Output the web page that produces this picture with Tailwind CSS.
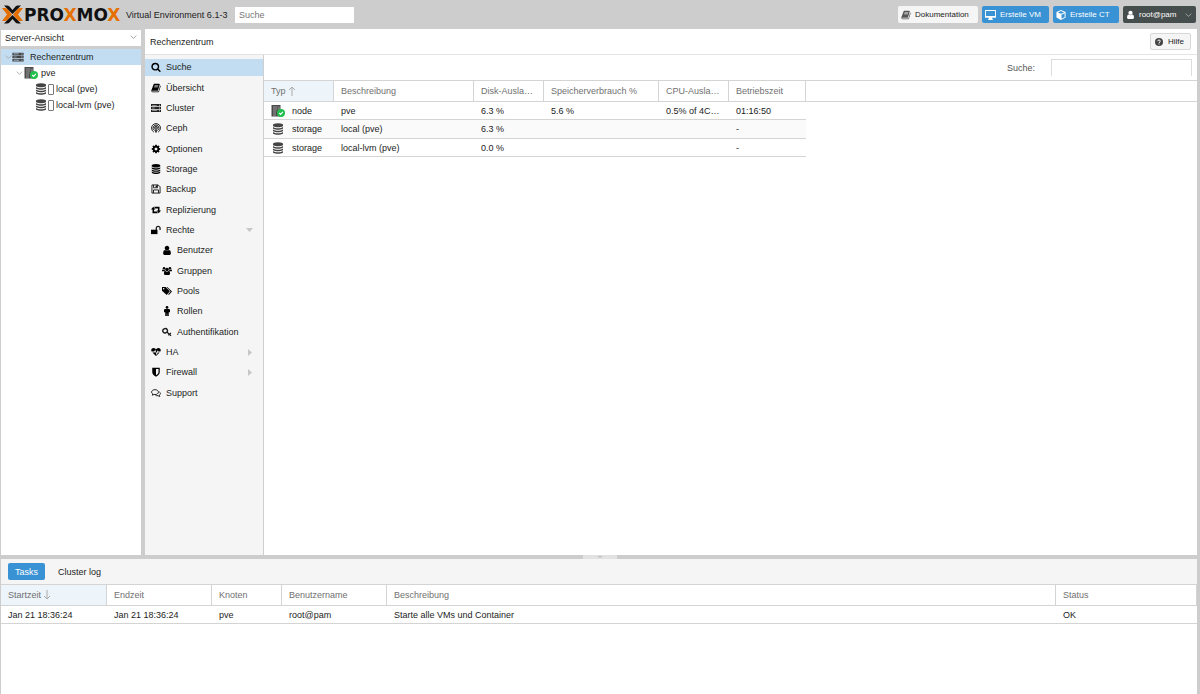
<!DOCTYPE html>
<html lang="de">
<head>
<meta charset="utf-8">
<title>Proxmox Virtual Environment</title>
<script src="https://cdn.jsdelivr.net/npm/@tailwindcss/browser@4"></script>
</head>
<body class="flex min-h-screen flex-col bg-[#cdcdcd] font-['Liberation_Sans',Arial,sans-serif] text-[9px] leading-3 text-[#1c1c1c]">
<svg class="hidden" aria-hidden="true">
  <symbol id="search" viewBox="0 0 1792 1792"><path d="M1216 832q0-185-131.5-316.5t-316.5-131.5-316.5 131.5-131.5 316.5 131.5 316.5 316.5 131.5 316.5-131.5 131.5-316.5zm512 832q0 52-38 90t-90 38q-54 0-90-38l-343-342q-179 124-399 124-143 0-273.5-55.5t-225-150-150-225-55.5-273.5 55.5-273.5 150-225 225-150 273.5-55.5 273.5 55.5 225 150 150 225 55.5 273.5q0 220-124 399l343 343q37 37 37 90z"/></symbol>
  <symbol id="book" viewBox="0 0 1792 1792"><path d="M1703 478q40 57 18 129l-275 906q-19 64-76.5 107.5t-122.5 43.5h-923q-77 0-148.5-53.5t-99.5-131.5q-24-67-2-127 0-4 3-27t4-37q1-8-3-21.5t-3-19.5q2-11 8-21t16.5-23.5 16.5-23.5q23-38 45-91.5t30-91.5q3-10 .5-30t-.5-28q3-11 17-28t17-23q21-36 42-92t25-90q1-9-2.5-32t.5-28q4-13 22-30.5t22-22.5q19-26 42.5-84.5t27.5-96.5q1-8-3-25.5t-2-26.5q2-8 9-18t18-23 17-21q8-12 16.5-30.5t15-35 16-36 19.5-32 26.5-23.5 36-11.5 47.5 5.5l-1 3q38-9 51-9h761q74 0 114 56t18 130l-274 906q-36 119-71.5 153.5t-128.5 34.5h-869q-27 0-38 15-11 16-1 43 24 70 144 70h923q29 0 56-15.5t35-41.5l300-987q7-22 5-57 38 15 59 43zm-1064 2q-4 13 2 22.5t20 9.5h608q13 0 25.5-9.5t16.5-22.5l21-64q4-13-2-22.5t-20-9.5h-608q-13 0-25.5 9.5t-16.5 22.5zm-83 256q-4 13 2 22.5t20 9.5h608q13 0 25.5-9.5t16.5-22.5l21-64q4-13-2-22.5t-20-9.5h-608q-13 0-25.5 9.5t-16.5 22.5z"/></symbol>
  <symbol id="server" viewBox="0 0 18 16"><path fill-rule="evenodd" d="M0 1h18v4H0zM0 6h18v4H0zM0 11h18v4H0zM2 2.500v1h8v-1zM2 7.500v1h5v-1zM2 12.500v1h9v-1zM14.500 2.200v1.600H16V2.200zM14.500 7.200v1.600H16V7.200zM14.500 12.200v1.600H16v-1.600z"/></symbol>
  <symbol id="ceph" viewBox="0 0 16 16"><g fill="none" stroke="currentColor" stroke-width="1.600" stroke-linecap="round"><path d="M4 14.200a7.200 7.200 0 1 1 8 0"/><path d="M5 11.700a4.700 4.700 0 1 1 6 0"/><path d="M6.200 9.300a2.300 2.300 0 1 1 3.600 0"/></g><circle cx="8" cy="8" r="1.200"/><path d="M6.800 10h2.400v5H6.800z"/></symbol>
  <symbol id="cog" viewBox="0 0 1792 1792"><path d="M1152 896q0-106-75-181t-181-75-181 75-75 181 75 181 181 75 181-75 75-181zm512-109v222q0 12-8 23t-20 13l-185 28q-19 54-39 91 35 50 107 138 10 12 10 25t-9 23q-27 37-99 108t-94 71q-12 0-26-9l-138-108q-44 23-91 38-16 136-29 186-7 28-36 28h-222q-14 0-24.500-8.500t-11.500-21.500l-28-184q-49-16-90-37l-141 107q-10 9-25 9-14 0-25-11-126-114-165-168-7-10-7-23 0-12 8-23 15-21 51-66.500t54-70.500q-27-50-41-99l-183-27q-13-2-21-12.500t-8-23.500v-222q0-12 8-23t19-13l186-28q14-46 39-92-40-57-107-138-10-12-10-24 0-10 9-23 26-36 98.500-107.500t94.500-71.500q13 0 26 10l138 107q44-23 91-38 16-136 29-186 7-28 36-28h222q14 0 24.500 8.500t11.500 21.500l28 184q49 16 90 37l142-107q9-9 24-9 13 0 25 10 129 119 165 170 7 8 7 22 0 12-8 23-15 21-51 66.500t-54 70.500q26 50 41 98l183 28q13 2 21 12.500t8 23.500z"/></symbol>
  <symbol id="database" viewBox="128 0 1536 1792"><path d="M896 768q237 0 443-43t325-127v170q0 69-103 128t-280 93.500-385 34.500-385-34.500-280-93.500-103-128v-170q119 84 325 127t443 43zm0 768q237 0 443-43t325-127v170q0 69-103 128t-280 93.500-385 34.500-385-34.500-280-93.500-103-128v-170q119 84 325 127t443 43zm0-384q237 0 443-43t325-127v170q0 69-103 128t-280 93.500-385 34.500-385-34.500-280-93.500-103-128v-170q119 84 325 127t443 43zm0-1152q208 0 385 34.500t280 93.500 103 128v128q0 69-103 128t-280 93.500-385 34.500-385-34.500-280-93.500-103-128v-128q0-69 103-128t280-93.500 385-34.500z"/></symbol>
  <symbol id="floppy" viewBox="0 0 16 16"><path fill="none" stroke="currentColor" stroke-width="1.500" d="M1.500 1.500h10l3 3v10h-13zM4 14.500v-5h8v5M4 1.500V6h6.500V1.500"/><path d="M7.500 2.300h2v2.700h-2z"/></symbol>
  <symbol id="retweet" viewBox="0 0 18 14"><path d="M4 1 8 6H5.500v3.700h5L12.500 13H2.700V6H0zM14 13l-4-5h2.500V4.300h-5L5.500 1h9.800v7H18z"/></symbol>
  <symbol id="unlock" viewBox="0 0 17 16"><path d="M0 7.500h11V15H0z"/><path fill="none" stroke="currentColor" stroke-width="2.200" d="M9 8V5a3.200 3.200 0 0 1 6.400 0v3"/></symbol>
  <symbol id="user" viewBox="128 0 1536 1664"><path d="M1536 1399q0 109-62.500 187t-150.500 78h-854q-88 0-150.500-78t-62.500-187q0-85 8.500-160.500t31.500-152 58.500-131 94-89 134.500-34.500q131 128 313 128t313-128q76 0 134.500 34.500t94 89 58.500 131 31.500 152 8.500 160.500zm-256-887q0 159-112.500 271.500t-271.500 112.500-271.500-112.500-112.500-271.500 112.500-271.500 271.500-112.500 271.500 112.500 112.500 271.500z"/></symbol>
  <symbol id="users" viewBox="0 0 18 16"><circle cx="3.700" cy="3" r="2.300"/><circle cx="14.300" cy="3" r="2.300"/><circle cx="9" cy="5.300" r="3.200"/><path d="M0 8.500C0 6.700.7 5.500 1.700 5.500c1 .7 2 .8 3.200.4C5 7.300 5.400 8 6 8.500H0zM18 8.500c0-1.800-.7-3-1.700-3-1 .7-2 .8-3.200.4-.1 1.400-.5 2.100-1.100 2.600zM3.500 13c0-3 .8-4.800 2.600-4.800 1.800 1.400 4 1.400 5.800 0 1.800 0 2.600 1.800 2.600 4.800 0 1.300-.8 2-2 2h-7c-1.200 0-2-.7-2-2z"/></symbol>
  <symbol id="tags" viewBox="0 0 18 16"><path fill-rule="evenodd" d="M0 1h6.500l7.500 7.500L8.500 15 0 7.500zM3 2.500a1.300 1.300 0 1 0 .1 0z"/><path d="M8 1h1.500L18 8.800 12.300 15l-1.200-1.200 4.400-5.100z"/></symbol>
  <symbol id="male" viewBox="0 0 16 16"><circle cx="8" cy="2.200" r="2.200"/><path d="M5 4.700h6q1.800 0 1.800 1.500V10h-2v6H8.300v-4h-.6v4H5.200v-6h-2V6.200Q3.200 4.700 5 4.700z"/></symbol>
  <symbol id="key" viewBox="0 0 16 16"><g fill="none" stroke="currentColor"><ellipse cx="5" cy="6" rx="3.800" ry="3.300" stroke-width="2.200" transform="rotate(-30 5 6)"/><path stroke-width="2" d="m7.800 8 6.700 6M10 13.200l2-2M12.500 11.200l1.700-1.800"/></g></symbol>
  <symbol id="heartbeat" viewBox="0 0 18 16"><path d="M1.200 7.300C-1 3.500 2 1 4.700 1 7 1 8.300 2.500 9 3.300 9.700 2.500 11 1 13.300 1c2.700 0 5.700 2.500 3.500 6.300h-3.600L12 5l-2 5-2.300-6-2 3.300zM2.500 8.700h4L7.600 7l2.500 6.500L12.300 8.700h3.200L9 15z"/></symbol>
  <symbol id="shield" viewBox="0 0 16 16"><path fill-rule="evenodd" d="M2 1h12v7.500c0 3-2.500 5.300-6 7-3.500-1.700-6-4-6-7zM8 3v10.300c2.700-1.500 4-3 4-4.800V3z"/></symbol>
  <symbol id="comments" viewBox="0 0 18 16"><g fill="none" stroke="currentColor" stroke-width="1.700" stroke-linejoin="round"><path d="M7.200 2c3.400 0 6.200 1.900 6.200 4.400s-2.800 4.400-6.200 4.400c-.6 0-1.200 0-1.700-.2L2.300 12l.8-2.400C1.800 8.800 1 7.700 1 6.400 1 3.900 3.800 2 7.200 2z"/><path d="M15 6c1.200.7 2 1.800 2 3 0 1.200-.8 2.300-2 3l.8 2.400-3.200-1.600c-1.600.3-3.400 0-4.600-.6"/></g></symbol>
  <symbol id="desktop" viewBox="0 0 18 16"><path fill-rule="evenodd" d="M1 0h16q1 0 1 1v10.500q0 1-1 1h-5.500l.7 2.500H13v1H5v-1h.8l.7-2.500H1q-1 0-1-1V1q0-1 1-1zM1.500 1.500v8h15v-8z"/></symbol>
  <symbol id="cube" viewBox="0 0 16 16"><path fill-rule="evenodd" d="M8 0l7.300 3v9L8 16 .7 12V3zM8 1.700 3 3.800 8 6l5-2.200zM8.800 7.500V14l5-2.700V5.200z"/></symbol>
  <symbol id="help" viewBox="0 0 16 16"><circle cx="8" cy="8" r="8"/><path fill="none" stroke="#f5f5f5" stroke-width="2" d="M5.300 6.300C5.500 4.700 6.500 4 8 4c1.600 0 2.700.9 2.700 2.200C10.700 8 8 8 8 10.200M8 11v2"/></symbol>
  <symbol id="node" viewBox="0 0 28 24"><path fill="#4a4a4a" d="M1 0h18v23H1z"/><path stroke="#b5b5b5" stroke-width="1.500" d="M4 4h9M4 8h9M4 12h7M4 16h6M4 20h6M16 3v7"/><circle cx="20" cy="16" r="8" fill="#21bf4b"/><path fill="none" stroke="#fff" stroke-width="2.300" d="m16.500 16 2.700 2.700 4.500-5"/></symbol>
  <symbol id="down" viewBox="0 0 10 8"><path fill="none" stroke="currentColor" stroke-width="1.300" d="m1 2 4 4 4-4"/></symbol>
</svg>

<header class="flex h-[29px] shrink-0 items-center pr-1 pl-[2px]">
  <svg class="h-[19px] w-[21px]" viewBox="0 0 42 38" aria-hidden="true">
    <path fill="#e57000" d="M0 6h6q3 0 5 2l9 11-9 11q-2 2-5 2H0l10-13zM42 6h-6q-3 0-5 2l-9 11 9 11q2 2 5 2h6L32 19z"/>
    <path fill="#111" d="M4 1h6q3 0 5 2l6 7 6-7q2-2 5-2h6L21 18zM4 37h6q3 0 5-2l6-7 6 7q2 2 5 2h6L21 20z"/>
  </svg>
  <h1 class="ml-px w-[98px] font-['DejaVu_Sans',sans-serif] text-[17px] leading-5 font-bold text-[#111]">PRO<span class="text-[#e57000]">X</span>MO<span class="text-[#e57000]">X</span></h1>
  <span class="ml-1 w-[109px] whitespace-nowrap">Virtual Environment 6.1-3</span>
  <input type="search" aria-label="Suche" placeholder="Suche" class="mt-px h-4 w-[119px] bg-white px-1 placeholder:text-[#777]">
  <div class="ml-auto flex gap-1 text-[8px]">
    <button class="flex h-[17px] w-20 items-center gap-1 rounded-xs bg-[#f5f5f5] pl-[3px]"><svg class="size-[10px] fill-[#555]"><use href="#book"/></svg>Dokumentation</button>
    <button class="flex h-[17px] w-[67px] items-center gap-1 rounded-xs bg-[#3892d4] pl-[3px] text-white"><svg class="h-[10px] w-[11px] fill-white"><use href="#desktop"/></svg>Erstelle VM</button>
    <button class="flex h-[17px] w-[66px] items-center gap-1 rounded-xs bg-[#3892d4] pl-[3px] text-white"><svg class="size-[10px] fill-white"><use href="#cube"/></svg>Erstelle CT</button>
    <button class="flex h-[17px] w-[73px] items-center gap-1 rounded-xs bg-[#464d4d] pl-[3px] text-white"><svg class="size-[9px] fill-white"><use href="#user"/></svg>root@pam<svg class="ml-auto mr-1 h-[6px] w-[7px] text-[#aaa]"><use href="#down"/></svg></button>
  </div>
</header>

<main class="flex flex-1 gap-1 pr-[3px] pl-px">
  <aside class="flex w-[140px] shrink-0 flex-col pt-px">
    <div class="relative">
      <select aria-label="Ansicht" class="block h-4 w-full appearance-none bg-white px-1"><option>Server-Ansicht</option></select>
      <svg class="pointer-events-none absolute top-1 right-1 h-[6px] w-[7px] text-[#999]"><use href="#down"/></svg>
    </div>
    <ul class="mt-[3px] flex-1 bg-white">
      <li class="flex h-4 items-center bg-[#c2ddf2] pl-1"><svg class="h-[6px] w-[7px] text-[#aaa]"><use href="#down"/></svg><svg class="h-[10px] w-[12px] fill-[#444]"><use href="#server"/></svg><span class="ml-[6px]">Rechenzentrum</span></li>
      <li class="flex h-4 items-center pl-[15px]"><svg class="h-[6px] w-[7px] text-[#aaa]"><use href="#down"/></svg><svg class="ml-px h-[12px] w-[14px]"><use href="#node"/></svg><span class="ml-[3px]">pve</span></li>
      <li class="flex h-4 items-center pl-[35px]"><svg class="h-[12px] w-[10px] fill-[#444]"><use href="#database"/></svg><span class="ml-[2px] h-[11px] w-[6px] rounded-[1px] border border-[#777]"></span><span class="ml-[2px]">local (pve)</span></li>
      <li class="flex h-4 items-center pl-[35px]"><svg class="h-[12px] w-[10px] fill-[#444]"><use href="#database"/></svg><span class="ml-[2px] h-[11px] w-[6px] rounded-[1px] border border-[#777]"></span><span class="ml-[2px]">local-lvm (pve)</span></li>
    </ul>
  </aside>

  <section class="flex min-w-0 flex-1 flex-col bg-white">
    <div class="flex h-[26px] shrink-0 items-center justify-between border-b border-[#e3e3e3] pr-[6px] pl-[5px]">
      <h2>Rechenzentrum</h2>
      <button class="flex h-[17px] w-[41px] items-center gap-[5px] rounded-xs border border-[#d8d8d8] bg-[#f5f5f5] pl-1 text-[8px]"><svg class="size-2 fill-[#444]"><use href="#help"/></svg>Hilfe</button>
    </div>
    <div class="flex flex-1">
      <nav class="w-[119px] shrink-0 border-r border-[#cfcfcf] bg-[#f5f5f5] pt-[2px]">
        <ul class="grid h-[346px] auto-rows-fr items-center">
          <li><a href="#" class="flex h-[17px] items-center gap-[5px] bg-[#c2ddf2] pl-[6px]"><svg class="size-[10px]"><use href="#search"/></svg>Suche</a></li>
          <li><a href="#" class="flex h-[17px] items-center gap-[5px] pl-[6px]"><svg class="size-[10px]"><use href="#book"/></svg>Übersicht</a></li>
          <li><a href="#" class="flex h-[17px] items-center gap-[5px] pl-[6px]"><svg class="size-[10px] fill-[#222]"><use href="#server"/></svg>Cluster</a></li>
          <li><a href="#" class="flex h-[17px] items-center gap-[5px] pl-[6px]"><svg class="size-[10px]"><use href="#ceph"/></svg>Ceph</a></li>
          <li><a href="#" class="flex h-[17px] items-center gap-[5px] pl-[6px]"><svg class="size-[10px]"><use href="#cog"/></svg>Optionen</a></li>
          <li><a href="#" class="flex h-[17px] items-center gap-[5px] pl-[6px]"><svg class="size-[10px]"><use href="#database"/></svg>Storage</a></li>
          <li><a href="#" class="flex h-[17px] items-center gap-[5px] pl-[6px]"><svg class="size-[10px]"><use href="#floppy"/></svg>Backup</a></li>
          <li><a href="#" class="flex h-[17px] items-center gap-[5px] pl-[6px]"><svg class="size-[10px]"><use href="#retweet"/></svg>Replizierung</a></li>
          <li><a href="#" class="flex h-[17px] items-center gap-[5px] pr-[10px] pl-[6px]"><svg class="size-[10px]"><use href="#unlock"/></svg>Rechte<svg class="ml-auto h-1 w-[7px] fill-[#c6c6c6]" viewBox="0 0 7 4"><path d="M0 0h7L3.500 4z"/></svg></a></li>
          <li><a href="#" class="flex h-[17px] items-center gap-[5px] pl-[17px]"><svg class="size-[10px]"><use href="#user"/></svg>Benutzer</a></li>
          <li><a href="#" class="flex h-[17px] items-center gap-[5px] pl-[17px]"><svg class="size-[10px]"><use href="#users"/></svg>Gruppen</a></li>
          <li><a href="#" class="flex h-[17px] items-center gap-[5px] pl-[17px]"><svg class="size-[10px]"><use href="#tags"/></svg>Pools</a></li>
          <li><a href="#" class="flex h-[17px] items-center gap-[5px] pl-[17px]"><svg class="size-[10px]"><use href="#male"/></svg>Rollen</a></li>
          <li><a href="#" class="flex h-[17px] items-center gap-[5px] pl-[17px]"><svg class="size-[10px]"><use href="#key"/></svg>Authentifikation</a></li>
          <li><a href="#" class="flex h-[17px] items-center gap-[5px] pr-[11px] pl-[6px]"><svg class="size-[10px]"><use href="#heartbeat"/></svg>HA<svg class="ml-auto h-[7px] w-1 fill-[#c6c6c6]" viewBox="0 0 4 7"><path d="M0 0v7l4-3.500z"/></svg></a></li>
          <li><a href="#" class="flex h-[17px] items-center gap-[5px] pr-[11px] pl-[6px]"><svg class="size-[10px]"><use href="#shield"/></svg>Firewall<svg class="ml-auto h-[7px] w-1 fill-[#c6c6c6]" viewBox="0 0 4 7"><path d="M0 0v7l4-3.500z"/></svg></a></li>
          <li><a href="#" class="flex h-[17px] items-center gap-[5px] pl-[6px]"><svg class="size-[10px]"><use href="#comments"/></svg>Support</a></li>
        </ul>
      </nav>
      <div class="min-w-0 flex-1">
        <div class="flex h-[25px] items-center justify-end pr-[5px]">
          <label for="filter" class="mr-4 text-[#555]">Suche:</label>
          <input id="filter" class="h-[17px] w-[141px] border border-b-0 border-[#dcdcdc] bg-white px-1">
        </div>
        <table class="w-full table-fixed border-separate border-spacing-0 text-left">
          <colgroup><col class="w-[70px]"><col class="w-[140px]"><col class="w-[70px]"><col class="w-[115px]"><col class="w-[70px]"><col class="w-[77px]"><col></colgroup>
          <thead class="text-[#707070]">
            <tr class="h-[22px] *:border-y *:border-r *:border-[#d4d4d4] *:px-[7px] *:py-0 *:font-normal *:whitespace-nowrap">
              <th class="bg-[#edf5fb]"><span class="flex items-center">Typ<svg class="ml-[2px] h-[10px] w-[8px] fill-none stroke-[#aaa]" viewBox="0 0 8 10"><path d="M4 10V1M1 4l3-3 3 3"/></svg></span></th>
              <th>Beschreibung</th><th>Disk-Ausla…</th><th>Speicherverbrauch %</th><th>CPU-Ausla…</th><th>Betriebszeit</th><td class="border-r-0!"></td>
            </tr>
          </thead>
          <tbody>
            <tr class="h-[18px] *:px-[7px] *:py-0 *:whitespace-nowrap [&>td:not(:last-child)]:border-b [&>td]:border-[#d4d4d4]">
              <td><span class="flex items-center"><svg class="h-[12px] w-[14px]"><use href="#node"/></svg><span class="ml-[7px]">node</span></span></td><td>pve</td><td>6.3 %</td><td>5.6 %</td><td>0.5% of 4C…</td><td>01:16:50</td><td></td>
            </tr>
            <tr class="h-[19px] *:px-[7px] *:py-0 *:whitespace-nowrap [&>td:not(:last-child)]:border-b [&>td:not(:last-child)]:bg-[#fafafa] [&>td]:border-[#d4d4d4]">
              <td><span class="flex items-center"><svg class="ml-[2px] h-[12px] w-[10px] fill-[#444]"><use href="#database"/></svg><span class="ml-[9px]">storage</span></span></td><td>local (pve)</td><td>6.3 %</td><td></td><td></td><td>-</td><td></td>
            </tr>
            <tr class="h-[18px] *:px-[7px] *:py-0 *:whitespace-nowrap [&>td:not(:last-child)]:border-b [&>td]:border-[#d4d4d4]">
              <td><span class="flex items-center"><svg class="ml-[2px] h-[12px] w-[10px] fill-[#444]"><use href="#database"/></svg><span class="ml-[9px]">storage</span></span></td><td>local-lvm (pve)</td><td>0.0 %</td><td></td><td></td><td>-</td><td></td>
            </tr>
          </tbody>
        </table>
      </div>
    </div>
  </section>
</main>

<div class="flex h-1 shrink-0 justify-center"><div class="flex w-[34px] items-center justify-center bg-[#e2e2e2]"><svg class="h-[2px] w-[6px] fill-[#c2c2c2]" viewBox="0 0 6 2"><path d="M0 0h6L3 2z"/></svg></div></div>

<section class="mr-[3px] ml-px h-[135px] shrink-0 bg-white">
  <div class="flex h-[25px] items-center bg-[#f5f5f5] pl-[7px]">
    <button class="h-[17px] w-[37px] rounded-xs bg-[#3892d4] text-white">Tasks</button>
    <button class="ml-[13px]">Cluster log</button>
  </div>
  <table class="w-full table-fixed border-separate border-spacing-0 text-left">
    <colgroup><col class="w-[106px]"><col class="w-[105px]"><col class="w-[70px]"><col class="w-[105px]"><col><col class="w-[141px]"></colgroup>
    <thead class="text-[#707070]">
      <tr class="h-[22px] *:border-y *:border-r *:border-[#d4d4d4] *:px-[7px] *:py-0 *:font-normal">
        <th class="bg-[#edf5fb]"><span class="flex items-center">Startzeit<svg class="ml-[2px] h-[10px] w-[8px] fill-none stroke-[#aaa]" viewBox="0 0 8 10"><path d="M4 0v9M1 6l3 3 3-3"/></svg></span></th>
        <th>Endzeit</th><th>Knoten</th><th>Benutzername</th><th>Beschreibung</th><th>Status</th>
      </tr>
    </thead>
    <tbody>
      <tr class="h-[18px] *:border-b *:border-[#d4d4d4] *:px-[7px] *:py-0">
        <td>Jan 21 18:36:24</td><td>Jan 21 18:36:24</td><td>pve</td><td>root@pam</td><td>Starte alle VMs und Container</td><td>OK</td>
      </tr>
    </tbody>
  </table>
</section>
</body>
</html>
